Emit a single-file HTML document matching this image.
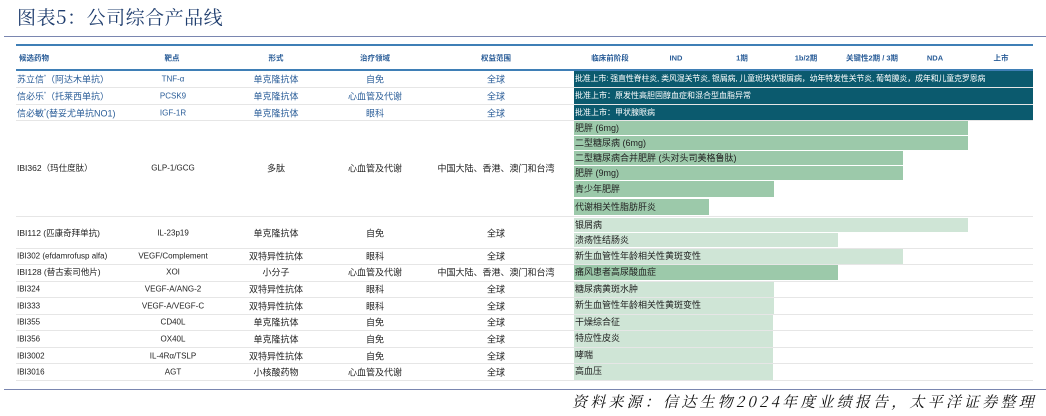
<!DOCTYPE html><html><head><meta charset="utf-8"><style>
body{margin:0;width:1046px;height:416px;background:#fff;position:relative;overflow:hidden;font-family:"Liberation Sans","Noto Sans CJK SC",sans-serif;}
.a{position:absolute;white-space:nowrap;}
.t{font-size:9px;color:#222;transform:translateY(-50%);}
.c{transform:translate(-50%,-50%);}
.h{font-size:7.5px;font-weight:bold;color:#2a5d98;transform:translate(-50%,-50%);}
.b{position:absolute;left:574px;font-size:9px;color:#222;line-height:14px;padding-left:1px;box-sizing:border-box;overflow:hidden;white-space:nowrap;}
.d{background:#0b5a6e;color:#fff;}
.g{background:#9cc9aa;}
.l{background:#cfe5d6;}
.ln{position:absolute;left:16px;width:1017px;height:1px;background:#e6e6e6;}
.bl{color:#2a5d98;}
</style></head><body>
<div class="a" style="left:17px;top:3px;font-family:'Noto Serif CJK SC',serif;font-size:19px;letter-spacing:0.5px;color:#1f3d6e;">图表5：公司综合产品线</div>
<div class="a" style="left:4px;top:36px;width:1042px;height:1px;background:#7a86b0"></div>
<div class="a" style="left:16px;top:44px;width:1017px;height:2px;background:#3f7fb6"></div>
<div class="a" style="left:16px;top:69px;width:1017px;height:2px;background:#3f7fb6"></div>
<div class="a h" style="left:34px;top:58px">候选药物</div>
<div class="a h" style="left:172px;top:58px">靶点</div>
<div class="a h" style="left:276px;top:58px">形式</div>
<div class="a h" style="left:375px;top:58px">治疗领域</div>
<div class="a h" style="left:496px;top:58px">权益范围</div>
<div class="a h" style="left:610px;top:58px">临床前阶段</div>
<div class="a h" style="left:676px;top:58px">IND</div>
<div class="a h" style="left:742px;top:58px">1期</div>
<div class="a h" style="left:806px;top:58px">1b/2期</div>
<div class="a h" style="left:872px;top:58px">关键性2期 / 3期</div>
<div class="a h" style="left:935px;top:58px">NDA</div>
<div class="a h" style="left:1001px;top:58px">上市</div>

<div class="ln" style="top:87px"></div><div class="ln" style="top:104px"></div><div class="ln" style="top:120px"></div>
<div class="ln" style="top:216px"></div><div class="ln" style="top:248px"></div><div class="ln" style="top:264px"></div><div class="ln" style="top:281px"></div><div class="ln" style="top:297px"></div><div class="ln" style="top:314px"></div><div class="ln" style="top:330px"></div><div class="ln" style="top:347px"></div><div class="ln" style="top:363px"></div><div class="ln" style="top:380px"></div>

<div class="b d" style="top:71px;width:459px;height:16px;line-height:16px;font-size:8px;letter-spacing:-0.2px">批准上市: 强直性脊柱炎, 类风湿关节炎, 银屑病, 儿童斑块状银屑病，幼年特发性关节炎, 葡萄膜炎，成年和儿童克罗恩病</div>
<div class="b d" style="top:88px;width:459px;height:16px;line-height:16px;font-size:8px">批准上市：原发性高胆固醇血症和混合型血脂异常</div>
<div class="b d" style="top:105px;width:459px;height:15px;line-height:15px;font-size:8px">批准上市：甲状腺眼病</div>
<div class="b g" style="top:121px;width:394px;height:14px">肥胖 (6mg)</div>
<div class="b g" style="top:136px;width:394px;height:14px">二型糖尿病 (6mg)</div>
<div class="b g" style="top:151px;width:329px;height:14px">二型糖尿病合并肥胖 (头对头司美格鲁肽)</div>
<div class="b g" style="top:166px;width:329px;height:14px">肥胖 (9mg)</div>
<div class="b g" style="top:181px;width:200px;height:16px;line-height:16px">青少年肥胖</div>
<div class="b g" style="top:199px;width:135px;height:16px;line-height:16px">代谢相关性脂肪肝炎</div>
<div class="b l" style="top:218px;width:394px;height:14px">银屑病</div>
<div class="b l" style="top:233px;width:264px;height:14px">溃疡性结肠炎</div>
<div class="b l" style="top:249px;width:329px;height:15px">新生血管性年龄相关性黄斑变性</div>
<div class="b g" style="top:265px;width:264px;height:15px">痛风患者高尿酸血症</div>
<div class="b l" style="top:282px;width:200px;height:15px">糖尿病黄斑水肿</div>
<div class="b l" style="top:298px;width:200px;height:16px">新生血管性年龄相关性黄斑变性</div>
<div class="b l" style="top:315px;width:199px;height:15px">干燥综合征</div>
<div class="b l" style="top:331px;width:199px;height:16px">特应性皮炎</div>
<div class="b l" style="top:348px;width:199px;height:15px">哮喘</div>
<div class="b l" style="top:364px;width:199px;height:16px">高血压</div>

<div class="a t bl" style="left:17px;top:79px">苏立信<sup style="font-size:5px">*</sup>（阿达木单抗）</div>
<div class="a t c bl" style="left:173px;top:79px;font-size:8px">TNF-α</div>
<div class="a t c bl" style="left:276px;top:79px">单克隆抗体</div>
<div class="a t c bl" style="left:375px;top:79px">自免</div>
<div class="a t c bl" style="left:496px;top:79px">全球</div>
<div class="a t bl" style="left:17px;top:96px">信必乐<sup style="font-size:5px">*</sup>（托莱西单抗）</div>
<div class="a t c bl" style="left:173px;top:96px;font-size:8px">PCSK9</div>
<div class="a t c bl" style="left:276px;top:96px">单克隆抗体</div>
<div class="a t c bl" style="left:375px;top:96px">心血管及代谢</div>
<div class="a t c bl" style="left:496px;top:96px">全球</div>
<div class="a t bl" style="left:17px;top:113px">信必敏<sup style="font-size:5px">*</sup>(替妥尤单抗NO1)</div>
<div class="a t c bl" style="left:173px;top:113px;font-size:8px">IGF-1R</div>
<div class="a t c bl" style="left:276px;top:113px">单克隆抗体</div>
<div class="a t c bl" style="left:375px;top:113px">眼科</div>
<div class="a t c bl" style="left:496px;top:113px">全球</div>

<div class="a t" style="left:17px;top:168px;font-size:8.5px">IBI362（玛仕度肽）</div>
<div class="a t c" style="left:173px;top:168px;font-size:8px">GLP-1/GCG</div>
<div class="a t c" style="left:276px;top:168px">多肽</div>
<div class="a t c" style="left:375px;top:168px">心血管及代谢</div>
<div class="a t c" style="left:496px;top:168px">中国大陆、香港、澳门和台湾</div>

<div class="a t" style="left:17px;top:233px;font-size:8.5px">IBI112 (匹康奇拜单抗)</div>
<div class="a t c" style="left:173px;top:233px;font-size:8px">IL-23p19</div>
<div class="a t c" style="left:276px;top:233px">单克隆抗体</div>
<div class="a t c" style="left:375px;top:233px">自免</div>
<div class="a t c" style="left:496px;top:233px">全球</div>

<div class="a t" style="left:17px;top:256px;font-size:8px">IBI302 (efdamrofusp alfa)</div>
<div class="a t c" style="left:173px;top:256px;font-size:8px">VEGF/Complement</div>
<div class="a t c" style="left:276px;top:256px">双特异性抗体</div>
<div class="a t c" style="left:375px;top:256px">眼科</div>
<div class="a t c" style="left:496px;top:256px">全球</div>

<div class="a t" style="left:17px;top:272px;font-size:8.5px">IBI128 (替古索司他片)</div>
<div class="a t c" style="left:173px;top:272px;font-size:8px">XOI</div>
<div class="a t c" style="left:276px;top:272px">小分子</div>
<div class="a t c" style="left:375px;top:272px">心血管及代谢</div>
<div class="a t c" style="left:496px;top:272px">中国大陆、香港、澳门和台湾</div>

<div class="a t" style="left:17px;top:289px;font-size:8px">IBI324</div>
<div class="a t c" style="left:173px;top:289px;font-size:8px">VEGF-A/ANG-2</div>
<div class="a t c" style="left:276px;top:289px">双特异性抗体</div>
<div class="a t c" style="left:375px;top:289px">眼科</div>
<div class="a t c" style="left:496px;top:289px">全球</div>

<div class="a t" style="left:17px;top:306px;font-size:8px">IBI333</div>
<div class="a t c" style="left:173px;top:306px;font-size:8px">VEGF-A/VEGF-C</div>
<div class="a t c" style="left:276px;top:306px">双特异性抗体</div>
<div class="a t c" style="left:375px;top:306px">眼科</div>
<div class="a t c" style="left:496px;top:306px">全球</div>

<div class="a t" style="left:17px;top:322px;font-size:8px">IBI355</div>
<div class="a t c" style="left:173px;top:322px;font-size:8px">CD40L</div>
<div class="a t c" style="left:276px;top:322px">单克隆抗体</div>
<div class="a t c" style="left:375px;top:322px">自免</div>
<div class="a t c" style="left:496px;top:322px">全球</div>

<div class="a t" style="left:17px;top:339px;font-size:8px">IBI356</div>
<div class="a t c" style="left:173px;top:339px;font-size:8px">OX40L</div>
<div class="a t c" style="left:276px;top:339px">单克隆抗体</div>
<div class="a t c" style="left:375px;top:339px">自免</div>
<div class="a t c" style="left:496px;top:339px">全球</div>

<div class="a t" style="left:17px;top:356px;font-size:8px">IBI3002</div>
<div class="a t c" style="left:173px;top:356px;font-size:8px">IL-4Rα/TSLP</div>
<div class="a t c" style="left:276px;top:356px">双特异性抗体</div>
<div class="a t c" style="left:375px;top:356px">自免</div>
<div class="a t c" style="left:496px;top:356px">全球</div>

<div class="a t" style="left:17px;top:372px;font-size:8px">IBI3016</div>
<div class="a t c" style="left:173px;top:372px;font-size:8px">AGT</div>
<div class="a t c" style="left:276px;top:372px">小核酸药物</div>
<div class="a t c" style="left:375px;top:372px">心血管及代谢</div>
<div class="a t c" style="left:496px;top:372px">全球</div>

<div class="a" style="left:4px;top:389px;width:1042px;height:1px;background:#7a86b0"></div>
<div class="a" style="left:572px;top:391px;font-family:'Noto Serif CJK SC',serif;font-style:italic;font-size:15px;color:#111;letter-spacing:3.2px">资料来源：信达生物2024年度业绩报告，太平洋证券整理</div>
</body></html>
